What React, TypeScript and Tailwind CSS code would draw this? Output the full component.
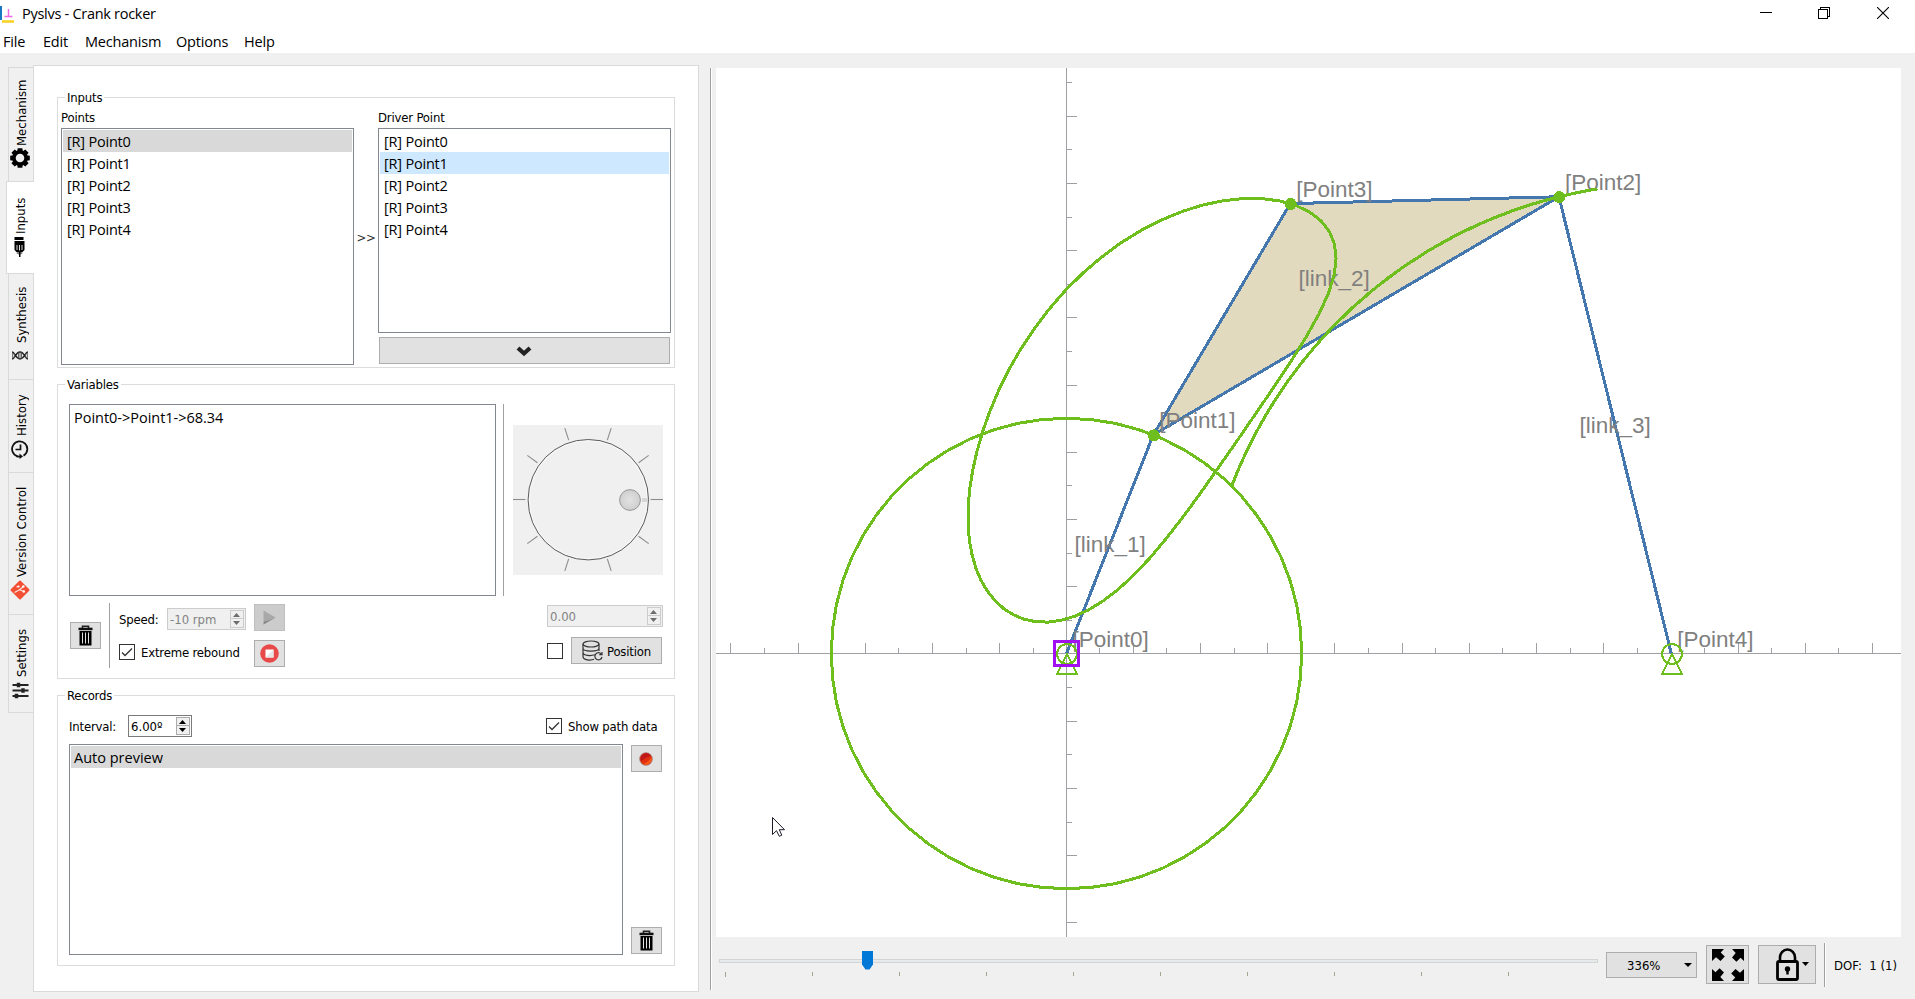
import React from "react";

const UI_BASE = "font-['DejaVu_Sans_Condensed','DejaVu_Sans',sans-serif] text-[13px] leading-4 whitespace-pre";
const UI = "font-['DejaVu_Sans_Condensed','DejaVu_Sans',sans-serif] text-[13px] leading-4 tracking-[-0.18px] whitespace-pre";
const SEGOE = "font-['Open_Sans',sans-serif] text-[14.5px] whitespace-pre";

/* ---------- mechanism geometry ---------- */

type Pt = [number, number];
const ZOOM = 6.72;
const OX = 350.5;
const OY = 585.5;
const P1: Pt = [12.92, 32.53];
const P2: Pt = [73.28, 67.97];
const P3: Pt = [33.3, 66.95];
const P4: Pt = [90, 0];

const sx = (p: Pt) => OX + p[0] * ZOOM;
const sy = (p: Pt) => OY - p[1] * ZOOM;
const dist = (a: Pt, b: Pt) => Math.hypot(a[0] - b[0], a[1] - b[1]);

function tracePaths() {
  const crank = Math.hypot(P1[0], P1[1]);
  const coupler = dist(P1, P2);
  const rocker = dist(P2, P4);
  const dx = P2[0] - P1[0];
  const dy = P2[1] - P1[1];
  const ex = P3[0] - P1[0];
  const ey = P3[1] - P1[1];
  const n = dx * dx + dy * dy;
  const re = (ex * dx + ey * dy) / n;
  const im = (ey * dx - ex * dy) / n;
  const a: Pt[] = [];
  const b: Pt[] = [];
  const c: Pt[] = [];
  for (let deg = 0; deg <= 360; deg += 6) {
    const t = (deg * Math.PI) / 180;
    const q1: Pt = [crank * Math.cos(t), crank * Math.sin(t)];
    const d = dist(q1, P4);
    const m = (coupler * coupler - rocker * rocker + d * d) / (2 * d);
    const h = Math.sqrt(Math.max(0, coupler * coupler - m * m));
    const ux = (P4[0] - q1[0]) / d;
    const uy = (P4[1] - q1[1]) / d;
    const q2: Pt = [q1[0] + m * ux - h * uy, q1[1] + m * uy + h * ux];
    const vx = q2[0] - q1[0];
    const vy = q2[1] - q1[1];
    const q3: Pt = [q1[0] + vx * re - vy * im, q1[1] + vy * re + vx * im];
    a.push(q1);
    b.push(q2);
    c.push(q3);
  }
  return [a, b, c].map((l) => l.map((p) => `${sx(p).toFixed(1)},${sy(p).toFixed(1)}`).join(" "));
}

const PATHS = tracePaths();
const X_TICKS = Array.from({ length: 36 }, (_, i) => i - 10);
const Y_TICKS = Array.from({ length: 26 }, (_, i) => i - 8);

function Ground({ p }: { p: Pt }) {
  const x = Math.round(sx(p) + 0.4);
  const y = Math.round(sy(p) - 0.5);
  return (
    <g fill="none" stroke="#6ebe1e" strokeWidth="2" shapeRendering="crispEdges">
      <circle cx={x} cy={y + 1} r="9.9" />
      <path d={`M${x} ${y + 1}L${x + 10} ${y + 21}H${x - 10}Z`} />
    </g>
  );
}

function Canvas() {
  const labels: [string, number, number][] = [
    ["[Point0]", 356.5, 579],
    ["[Point1]", sx(P1) + 6, sy(P1) - 6.5],
    ["[Point2]", sx(P2) + 6, sy(P2) - 6.5],
    ["[Point3]", sx(P3) + 6, sy(P3) - 6.5],
    ["[Point4]", sx(P4) + 6, 579],
    ["[link_1]", 358.5, 484],
    ["[link_2]", 582.5, 218],
    ["[link_3]", 863.5, 365],
  ];
  return (
    <svg className="block bg-white" width="1185" height="869" viewBox="0 0 1185 869">
      <g stroke="#a0a0a4" strokeWidth="1" shapeRendering="crispEdges">
        <path d="M0 585.5H1185M350.5 0V869" />
        {X_TICKS.map((i) => {
          const x = OX + Math.trunc(i * 33.6);
          return <line key={i} x1={x} x2={x} y1="585" y2={i % 2 === 0 ? 575 : 580} />;
        })}
        {Y_TICKS.map((i) => {
          const y = OY + (i < 0 ? 1 : 0) - Math.trunc(i * 33.6);
          return <line key={i} y1={y} y2={y} x1="351" x2={i % 2 === 0 ? 361 : 356} />;
        })}
      </g>
      <g stroke="#4477ad" strokeWidth="3" shapeRendering="crispEdges">
        <path fill="#e2dabe" d={`M${sx(P1)} ${sy(P1)}L${sx(P2)} ${sy(P2)}L${sx(P3)} ${sy(P3)}Z`} />
        <path fill="none" d={`M${OX} ${OY}L${sx(P1)} ${sy(P1)}M${sx(P2)} ${sy(P2)}L${sx(P4)} ${OY}`} />
      </g>
      <g fill="#808080" className="font-['Liberation_Sans',Arial,sans-serif] text-[22.5px]">
        {labels.map(([t, x, y]) => (
          <text key={t} x={x} y={y}>
            {t}
          </text>
        ))}
      </g>
      <g fill="none" stroke="#6ebe1e" strokeWidth="3" shapeRendering="crispEdges">
        {PATHS.map((p, i) => (
          <polyline key={i} points={p} />
        ))}
      </g>
      <g fill="#6ebe1e" shapeRendering="crispEdges">
        {[P1, P2, P3].map((p, i) => (
          <circle key={i} cx={sx(p) + 0.4} cy={sy(p) + 0.4} r="6" />
        ))}
      </g>
      <Ground p={[0, 0]} />
      <Ground p={P4} />
      <rect x="338.5" y="573.5" width="24" height="24" fill="none" stroke="#a010f0" strokeWidth="3" shapeRendering="crispEdges" />
      <path d="M56.5 749.5V766.5L60.5 762.7L63.3 768.3L65.8 767.2L63.3 761.7H68.5Z" fill="#fff" stroke="#1c1c28" strokeWidth="1" />
    </svg>
  );
}

/* ---------- small widgets ---------- */

function SpinBox({ value, className, disabled }: { value: string; className: string; disabled?: boolean }) {
  const fill = disabled ? "#6d6d6d" : "#000";
  const edge = disabled ? "border-[#cccccc]" : "border-[#ababab]";
  return (
    <div
      className={`${className} flex h-[22px] justify-between border p-px pl-[2px] ${
        disabled ? "border-[#cccccc] bg-[#f0f0f0] text-[#838383]" : "border-[#7a7a7a] bg-white text-black"
      }`}
    >
      <span className={`${UI_BASE} pt-[2px]`}>{value}</span>
      <span className="flex w-[14px] flex-col">
        <span className={`flex h-[9px] items-center border bg-[#f0f0f0] pl-[2px] ${edge}`}>
          <svg width="7" height="4" viewBox="0 0 7 4"><path d="M0 4L3.500 0L7 4Z" fill={fill} /></svg>
        </span>
        <span className={`flex h-[9px] items-center border border-t-0 bg-[#f0f0f0] pl-[2px] ${edge}`}>
          <svg width="7" height="4" viewBox="0 0 7 4"><path d="M0 0H7L3.500 4Z" fill={fill} /></svg>
        </span>
      </span>
    </div>
  );
}

function CheckBox({ checked }: { checked?: boolean }) {
  return (
    <span className="block h-4 w-4 shrink-0 border border-[#333] bg-white">
      {checked && (
        <svg width="14" height="14" viewBox="0 0 14 14">
          <path d="M2 7.5L5 10.5L12 3.5" fill="none" stroke="#333" strokeWidth="1.3" />
        </svg>
      )}
    </span>
  );
}

function Button({ className, children }: { className: string; children: React.ReactNode }) {
  return (
    <button className={`flex shrink-0 items-center justify-center border border-[#adadad] bg-[#e1e1e1] ${className}`}>{children}</button>
  );
}

function Trash() {
  return (
    <svg width="15" height="21" viewBox="0 0 15 21">
      <path d="M4.5 3V1.2H10.5V3" fill="none" stroke="#222" strokeWidth="1.6" />
      <path d="M0.5 2.7H14.5V5.2H0.5Z" fill="#111" />
      <path d="M1.5 6H13.5V20.5H1.5Z" fill="#000" />
      <path d="M4.5 7.5V18.5M7.5 7.5V18.5M10.5 7.5V18.5" stroke="#e1e1e1" strokeWidth="1" />
    </svg>
  );
}

function List({ className, items, highlight, highlightClass }: { className: string; items: string[]; highlight?: number; highlightClass?: string }) {
  return (
    <ul className={`${className} border border-[#828790] bg-white p-px ${SEGOE} text-black`}>
      {items.map((t, i) => (
        <li key={t} className={`h-[22px] leading-[24px] ${i === highlight ? highlightClass : ""}`}>
          {t}
        </li>
      ))}
    </ul>
  );
}

function Group({ title, className, children }: { title: string; className: string; children: React.ReactNode }) {
  return (
    <section className={`relative w-[618px] border border-[#dcdcdc] ${className}`}>
      <h2 className={`absolute -top-[8px] left-[7px] bg-white px-[2px] ${UI}`}>{title}</h2>
      {children}
    </section>
  );
}

function Divider({ className }: { className: string }) {
  return <div className={`w-[2px] shrink-0 border-l border-[#a0a0a0] bg-white ${className}`} />;
}

/* ---------- tabs ---------- */

function Gear() {
  return (
    <svg width="20" height="20" viewBox="0 0 20 20">
      <circle cx="10" cy="10" r="6" fill="none" stroke="#000" strokeWidth="3.4" />
      {[0, 45, 90, 135, 180, 225, 270, 315].map((a) => (
        <path key={a} d="M7.7 0.2H12.3L12.8 3.6H7.2Z" transform={`rotate(${a} 10 10)`} />
      ))}
    </svg>
  );
}

function Motor() {
  return (
    <svg width="11" height="20" viewBox="0 0 11 20">
      <path d="M0.5 0H9.5V3H0.5Z M0.5 4H10.5V13L8 15.5H3L0.5 13Z" />
      <path d="M3 8V13M5.5 8V13.5M8 8V13" stroke="#ddd" strokeWidth="1" />
      <path d="M2 16H9L5.5 18Z" fill="#777" />
      <path d="M5 15H6.5V20H5Z" />
    </svg>
  );
}

function Dna() {
  return (
    <svg width="16" height="9" viewBox="0 0 16 9" fill="none" stroke="#222" strokeWidth="1.4">
      <path d="M0 1C3 1 3.500 8 8 8S13 1 16 1M0 8C3 8 3.500 1 8 1S13 8 16 8" />
      <path d="M0.700 1.500V7.500M2.500 2.500V6.500M6.500 1.500V7.500M8 1.500V7.500M9.500 1.500V7.500M13.500 2.500V6.500M15.300 1.500V7.500" stroke="#555" strokeWidth="0.9" />
    </svg>
  );
}

function Clock() {
  return (
    <svg width="18" height="19" viewBox="0 0 18 19" fill="none" stroke="#111" strokeWidth="1.8">
      <path d="M6.500 16.300A7.600 7.600 0 1 1 12.500 15.600" />
      <path d="M9.500 4.500V9.500H4.500" strokeWidth="1.700" />
      <path d="M5.500 16.500H10" />
      <path d="M8.500 13.500L12 16.500L8.500 19Z" fill="#111" stroke="none" />
    </svg>
  );
}

function Git() {
  return (
    <svg width="20" height="20" viewBox="0 0 20 20">
      <rect x="3" y="3" width="14" height="14" rx="1" fill="#f34f34" transform="rotate(45 10 10)" />
      <path d="M4.500 12.500L9.500 9.800L13.500 6.500M9.500 9.800L14 11.500M6.500 7L9 6.300" stroke="#fde4df" strokeWidth="1.200" fill="none" />
      <circle cx="13.300" cy="6.500" r="1.300" fill="#fff" />
      <circle cx="8.500" cy="6.500" r="1.100" fill="#fff" />
      <circle cx="13.800" cy="11.500" r="1.200" fill="#fff" />
    </svg>
  );
}

function Sliders() {
  return (
    <svg width="17" height="17" viewBox="0 0 17 17">
      <path d="M0.500 3H16.500M0.500 8.500H16.500M0.500 14H16.500" stroke="#222" strokeWidth="2" />
      <path d="M6.500 0.800V5.200M11 6.300V10.700M4.500 11.800V16.200" stroke="#222" strokeWidth="3.400" />
    </svg>
  );
}

function Tab({ label, icon, className, textClass, iconClass }: { label: string; icon: React.ReactNode; className: string; textClass: string; iconClass: string }) {
  return (
    <div className={`flex flex-col items-start border-[#d9d9d9] ${className}`}>
      <span className={`${UI_BASE} ${textClass} flex w-4 shrink-0 rotate-180 items-center justify-center [writing-mode:vertical-rl]`}>{label}</span>
      <span className={`${iconClass} flex h-[20px] w-[20px] shrink-0 items-center justify-center`}>{icon}</span>
    </div>
  );
}

function Tabs() {
  return (
    <nav className="relative z-10 flex w-[34px] shrink-0 flex-col items-end pt-[14px]">
      <Tab label="Mechanism" icon={<Gear />} className="h-[114px] w-[26px] border-x border-t bg-[#f0f0f0] pt-[12px]" textClass="ml-[5px] h-[65px]" iconClass="ml-[1px] mt-[3px]" />
      <Tab label="Inputs" icon={<Motor />} className="h-[93px] w-[28px] border-y border-l bg-white pt-[17px]" textClass="ml-[6px] h-[34px]" iconClass="ml-[2px] mt-[4px]" />
      <Tab label="Synthesis" icon={<Dna />} className="h-[105px] w-[26px] border-x bg-[#f0f0f0] pt-[13px]" textClass="ml-[5px] h-[55px]" iconClass="ml-[1px] mt-[3px]" />
      <Tab label="History" icon={<Clock />} className="h-[93px] w-[26px] border-x border-t bg-[#f0f0f0] pt-[15px]" textClass="ml-[5px] h-[40px]" iconClass="ml-[1px] mt-[4px]" />
      <Tab label="Version Control" icon={<Git />} className="h-[142px] w-[26px] border-x border-t bg-[#f0f0f0] pt-[15px]" textClass="ml-[5px] h-[88px] tracking-[0.1px]" iconClass="ml-[1px] mt-[4px]" />
      <Tab label="Settings" icon={<Sliders />} className="h-[99px] w-[26px] border bg-[#f0f0f0] pt-[15px]" textClass="ml-[5px] h-[47px]" iconClass="ml-[1px] mt-[3px]" />
    </nav>
  );
}

/* ---------- left panel ---------- */

const POINTS = ["[R] Point0", "[R] Point1", "[R] Point2", "[R] Point3", "[R] Point4"];

function Dial() {
  return (
    <svg className="mt-[21px] ml-2 block bg-[#f0f0f0]" width="150" height="150" viewBox="0 0 150 150">
      <defs>
        <radialGradient id="knob">
          <stop offset="0" stopColor="#e2e2e2" />
          <stop offset="1" stopColor="#cfcfcf" />
        </radialGradient>
      </defs>
      {[0, 36, 72, 108, 144, 180, 216, 252, 288, 324].map((a) => (
        <path key={a} d="M137.500 74.500H150" stroke="#8c8c8c" strokeWidth="1.100" transform={`rotate(${a} 75 74.500)`} />
      ))}
      <circle cx="75.300" cy="74.700" r="59" fill="none" stroke="#fafafa" strokeWidth="1" />
      <circle cx="75.300" cy="74.700" r="60.200" fill="none" stroke="#5c5c5c" strokeWidth="1" />
      <rect x="129" y="73" width="6" height="4" fill="#d6d6d6" />
      <circle cx="117" cy="75" r="10.400" fill="url(#knob)" stroke="#979797" strokeWidth="1" />
    </svg>
  );
}

function InputsGroup() {
  return (
    <Group title="Inputs" className="flex h-[271px] pl-[3px]">
      <div className="w-[293px]">
        <div className={`${UI} h-[30px] pt-[12px]`}>Points</div>
        <List className="h-[237px] indent-[4px] tracking-[-0.2px]" items={POINTS} highlight={0} highlightClass="bg-[#d9d9d9]" />
      </div>
      <div className={`${UI} w-6 pt-[132px] text-center text-[#333]`}>{">>"}</div>
      <div className="w-[293px]">
        <div className={`${UI} h-[30px] pt-[12px]`}>Driver Point</div>
        <List className="h-[205px] indent-[4px] tracking-[-0.2px]" items={POINTS} highlight={1} highlightClass="bg-[#cde8ff]" />
        <Button className="mx-px mt-1 h-[27px] w-[291px] pr-[2px]">
          <svg width="16" height="12" viewBox="0 0 16 12">
            <path d="M2 3L8 8.500L14 3" fill="none" stroke="#222" strokeWidth="4.200" />
          </svg>
        </Button>
      </div>
    </Group>
  );
}

function VariablesGroup() {
  return (
    <Group title="Variables" className="h-[295px] pt-[19px]">
      <div className="flex h-[192px] pl-[11px]">
        <List className="w-[427px] indent-[3px] tracking-[-0.02px]" items={["Point0->Point1->68.34"]} />
        <Divider className="ml-[7px]" />
        <Dial />
      </div>
      <div className="flex pl-3">
        <Button className="mt-[26px] h-[27px] w-[31px] pr-px"><Trash /></Button>
        <Divider className="mt-[7px] ml-2 h-[65px]" />
        <div className="ml-2 w-[127px] pt-3">
          <div className="flex items-center justify-between">
            <span className={`${UI} pt-[2px]`}>Speed:</span>
            <SpinBox value="-10 rpm" className="w-[79px]" disabled />
          </div>
          <div className="mt-[14px] flex h-4 items-center gap-[6px]">
            <CheckBox checked />
            <span className={`${UI} pt-[2px]`}>Extreme rebound</span>
          </div>
        </div>
        <div className="ml-2 flex flex-col gap-[9px] pt-2">
          <button className="flex h-[27px] w-[31px] items-center justify-center border border-[#bfbfbf] bg-[#cccccc]">
            <svg width="13" height="15" viewBox="0 0 13 15">
              <path d="M0.500 0.500L12.500 7.500L0.500 14.500Z" fill="#a9a9a9" />
              <path d="M1 11.500C5 11 9 9 12.500 7.500L0.500 14.500Z" fill="#888" />
            </svg>
          </button>
          <Button className="h-[27px] w-[31px] pr-px">
            <svg width="19" height="19" viewBox="0 0 19 19">
              <circle cx="9.500" cy="9.500" r="9.300" fill="#e84a4a" />
              <rect x="5.500" y="5.500" width="8" height="8" fill="#fff" />
              <path d="M13.500 5.500V13.500H5.500Z" fill="#e6e6e6" />
            </svg>
          </Button>
        </div>
        <div className="ml-[262px] w-[116px] pt-[9px]">
          <SpinBox value="0.00" className="w-[116px]" disabled />
          <div className="mt-[10px] flex items-center gap-2">
            <CheckBox />
            <Button className="h-[27px] w-[91px] gap-[4px]">
              <svg width="21" height="21" viewBox="0 0 21 21" fill="none" stroke="#333" strokeWidth="1.200">
                <ellipse cx="9" cy="4" rx="8" ry="3" />
                <path d="M1 4V16.500C1 20.500 9 20.500 12 19.300M17 4V11M1 8.300C1 12 17 12 17 8.300M1 12.500C1 16 9 16 13 14.800" />
                <path d="M19.300 14A3.600 3.600 0 1 0 20 17M20 12V14.700H17.300" />
              </svg>
              <span className={`${UI} pt-[2px]`}>Position</span>
            </Button>
          </div>
        </div>
      </div>
    </Group>
  );
}

function RecordsGroup() {
  return (
    <Group title="Records" className="h-[271px] pt-[19px] pl-[11px]">
      <div className="flex h-[22px] w-[594px] items-center">
        <span className={`${UI} w-[59px] pt-[2px]`}>Interval:</span>
        <SpinBox value="6.00º" className="w-[64px]" />
        <div className="ml-[354px] flex h-4 items-center gap-[6px]">
          <CheckBox checked />
          <span className={`${UI} pt-[2px]`}>Show path data</span>
        </div>
      </div>
      <div className="mt-[7px] flex gap-2">
        <List className="h-[211px] w-[554px] indent-[3px]" items={["Auto preview"]} highlight={0} highlightClass="bg-[#d9d9d9]" />
        <div className="flex h-[211px] flex-col justify-between py-px">
          <Button className="h-[27px] w-[31px] pr-[2px]">
            <svg width="14" height="14" viewBox="0 0 14 14">
              <circle cx="7" cy="7" r="6.300" fill="#e03010" stroke="#9c8078" strokeWidth="0.800" />
              <path d="M2 9.500A6 6 0 0 1 9.500 1.500L12 4C7 5 5 7 2 9.500Z" fill="#c01818" />
              <path d="M4 12C8 11 11 8 12.500 5A6 6 0 0 1 4 12Z" fill="#ff5a18" />
            </svg>
          </Button>
          <Button className="h-[27px] w-[31px] pr-px"><Trash /></Button>
        </div>
      </div>
    </Group>
  );
}

/* ---------- bottom bar ---------- */

const SLIDER_TICKS = [1, 2, 3, 4, 5, 6, 7, 8, 9];

function BottomBar() {
  return (
    <div className="flex pl-[3px]">
      <div className="relative w-[879px] pt-[22px]">
        <div className="h-1 border border-[#d1d5d5] bg-[#e7eaea]" />
        <svg className="absolute top-[14px] left-[143px]" width="11" height="19" viewBox="0 0 11 19">
          <path d="M0 0H11V13.500L7.500 18.500H3.500L0 13.500Z" fill="#0078d7" />
        </svg>
        <div className="mt-[9px] ml-[6px] flex items-start gap-[86px]">
          <span className="h-[5px] w-px bg-[#a8a392]" />
          {SLIDER_TICKS.map((i) => (
            <span key={i} className="h-1 w-px bg-[#a8a392]" />
          ))}
        </div>
      </div>
      <Button className="mt-[15px] ml-2 h-[26px] w-[91px]">
        <span className={`${UI_BASE} ml-[16px] w-[57px] pt-px text-left`}>336%</span>
        <svg width="8" height="4" viewBox="0 0 8 4"><path d="M0 0H8L4 4Z" /></svg>
      </Button>
      <Button className="mt-2 ml-[9px] h-[39px] w-[43px]">
        <svg width="32" height="32" viewBox="0 0 32 32">
          {[0, 90, 180, 270].map((a) => (
            <path key={a} d="M0 0H12L8.700 3.500L12.800 7.600L8.500 12L4 8.300L0 12Z" transform={`rotate(${a} 16 16)`} />
          ))}
        </svg>
      </Button>
      <Button className="mt-2 ml-[9px] h-[39px] w-[58px] gap-[3px] pl-[11px]">
        <svg width="23" height="33" viewBox="0 0 23 33">
          <path d="M4 13V9.500A7.500 8 0 0 1 19 9.500V13" fill="none" stroke="#000" strokeWidth="2.600" />
          <rect x="1.500" y="13.500" width="20" height="18" rx="1.500" fill="none" stroke="#000" strokeWidth="2.800" />
          <circle cx="11.500" cy="21" r="2.700" />
          <path d="M10.300 21H12.700V26.500H10.300Z" />
        </svg>
        <svg className="mb-px" width="7" height="4" viewBox="0 0 7 4"><path d="M0 0H7L3.500 4Z" /></svg>
      </Button>
      <Divider className="mt-[6px] ml-2 h-[44px]" />
      <span className={`${UI_BASE} mt-[21px] ml-2`}>{"DOF:  1 (1)"}</span>
    </div>
  );
}

/* ---------- window ---------- */

export default function App() {
  return (
    <div className="flex h-[999px] w-[1915px] flex-col overflow-hidden bg-[#f0f0f0] text-black">
      <header className="flex h-[28px] items-center bg-white">
        <svg width="14" height="22" viewBox="0 0 14 22">
          <path d="M0 3H2V17H0Z" fill="#1a78c2" />
          <path d="M2 18.500H14" stroke="#f7d21e" strokeWidth="2.500" />
          <path d="M8.500 6V13.500M4.500 13.500H12.500" stroke="#f06ae6" strokeWidth="1.500" />
        </svg>
        <h1 className={`${SEGOE} ml-2 leading-[22px] tracking-[-0.28px]`}>Pyslvs - Crank rocker</h1>
        <div className="mr-[26px] mb-[2px] ml-auto flex gap-[46px]">
          <svg width="12" height="12" viewBox="0 0 12 12"><path d="M0 5.500H12" stroke="#000" shapeRendering="crispEdges" /></svg>
          <svg width="12" height="12" viewBox="0 0 12 12" fill="none" stroke="#000" shapeRendering="crispEdges">
            <path d="M0.500 2.500H9.500V11.500H0.500ZM2.500 2.500V0.500H11.500V9.500H9.500" />
          </svg>
          <svg className="ml-px" width="12" height="12" viewBox="0 0 12 12"><path d="M0 0L12 12M12 0L0 12" stroke="#000" strokeWidth="1.100" /></svg>
        </div>
      </header>
      <nav className={`${SEGOE} flex h-[25px] bg-white pl-[3px] leading-[27px] tracking-[-0.2px]`}>
        <span className="w-[40px]">File</span>
        <span className="w-[42px]">Edit</span>
        <span className="w-[91px]">Mechanism</span>
        <span className="w-[68px]">Options</span>
        <span>Help</span>
      </nav>
      <main className="flex h-[946px]">
        <Tabs />
        <div className="mt-3 -ml-px flex h-[927px] w-[666px] shrink-0 flex-col gap-4 border border-[#d9d9d9] bg-white pt-[31px] pl-[23px]">
          <InputsGroup />
          <VariablesGroup />
          <RecordsGroup />
        </div>
        <Divider className="mt-[15px] ml-[11px] h-[922px]" />
        <div className="mt-[15px] ml-1 w-[1199px]">
          <Canvas />
          <BottomBar />
        </div>
      </main>
    </div>
  );
}
